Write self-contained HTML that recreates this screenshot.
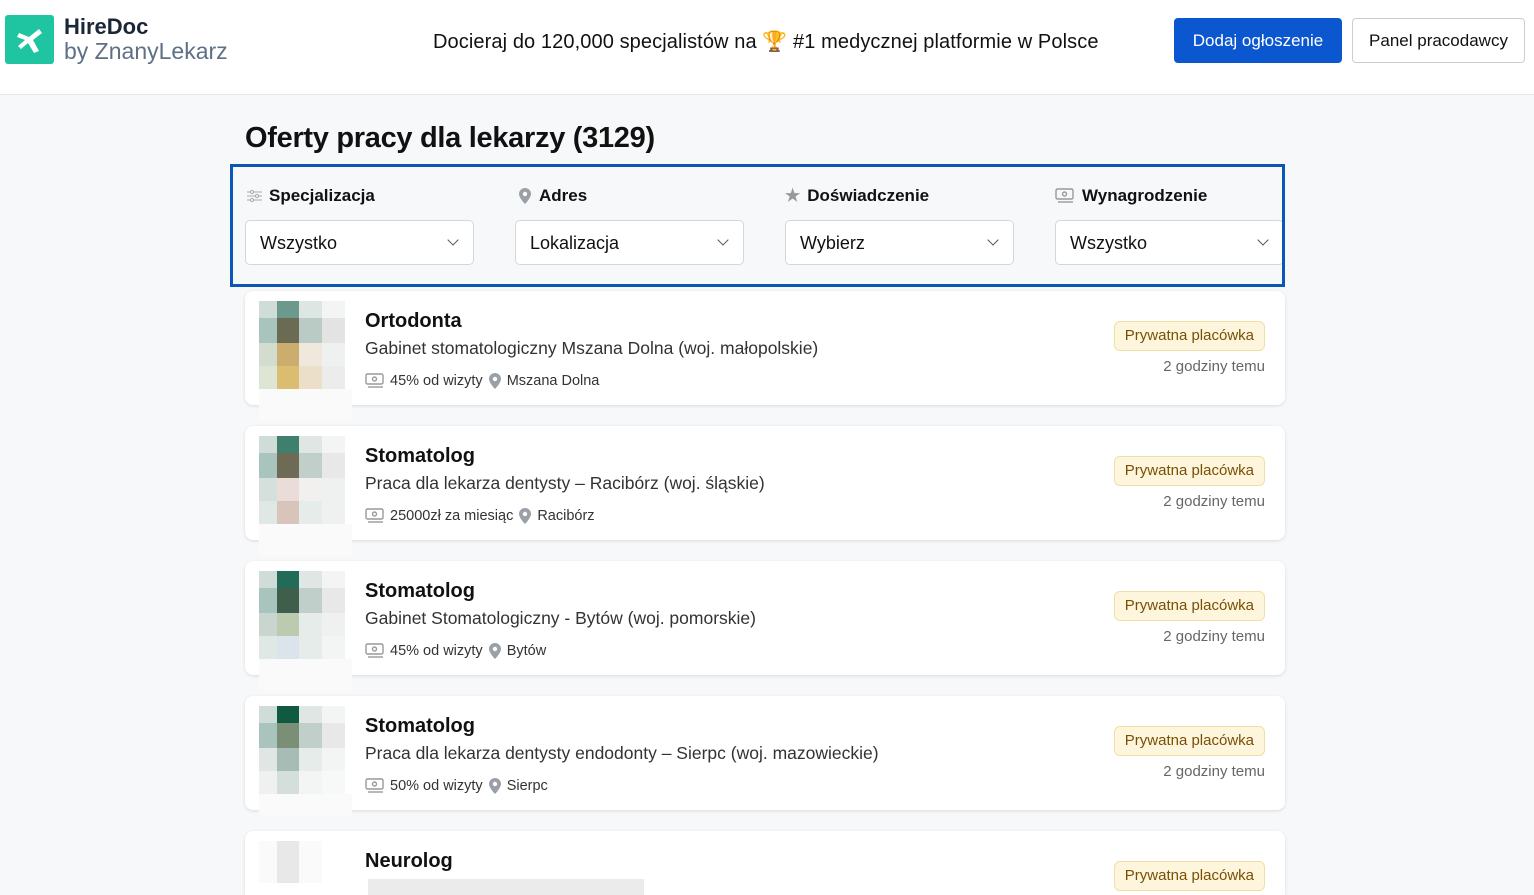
<!DOCTYPE html>
<html><head><meta charset="utf-8"><style>
*{box-sizing:border-box;margin:0;padding:0}
html,body{width:1534px;height:895px;overflow:hidden}
body{background:#f7f8fa;font-family:"Liberation Sans",sans-serif;color:#1a2330;position:relative}
.hdr{position:absolute;left:0;top:0;width:1534px;height:95px;background:#fff;border-bottom:1px solid #e3e6ea}
.logo{position:absolute;left:5px;top:15px;width:49px;height:49px;background:#1fc4a1;border-radius:3px}
.brand{position:absolute;left:64px;top:14px;font-size:22px;line-height:25px}
.brand b{color:#1b2636;font-weight:bold}
.brand span{color:#5f6f84;display:block;font-size:23px}
.tag{position:absolute;left:433px;top:29px;font-size:20px;color:#111;letter-spacing:0.1px}
.btn1{position:absolute;left:1174px;top:18px;width:168px;height:45px;background:#0b57d0;color:#fff;border-radius:4px;font-size:17px;text-align:center;line-height:45px}
.btn2{position:absolute;left:1352px;top:18px;width:173px;height:45px;background:#fff;border:1px solid #c9ced5;color:#111;border-radius:4px;font-size:17px;text-align:center;line-height:43px}
h1{position:absolute;left:245px;top:122px;font-size:29px;font-weight:bold;color:#111;letter-spacing:-0.3px}
.filt{position:absolute;left:230px;top:164px;width:1055px;height:123px;border:3px solid #0b57b7;background:#f7f8fa;overflow:hidden}
.f{position:absolute;top:0}
.f .l{position:absolute;top:19px;font-size:17px;font-weight:bold;color:#111;white-space:nowrap;display:flex;align-items:center;gap:7px}
.f .s{position:absolute;top:53px;width:229px;height:45px;background:#fff;border:1px solid #d3d7dc;border-radius:5px;font-size:18px;padding-left:14px;line-height:44px;color:#111}
.f .s i{position:absolute;right:16px;top:15px;width:8px;height:8px;border-right:1.5px solid #555;border-bottom:1.5px solid #555;transform:rotate(45deg)}
.card{position:absolute;left:245px;width:1040px;height:114px;background:#fff;border-radius:8px;box-shadow:0 1px 3px rgba(0,0,0,.12);overflow:visible}
.img{position:absolute;left:14px;top:10px;display:grid;grid-template-columns:18px 22px 23px 23px;grid-template-rows:17px 25px 23px 23px}
.under{position:absolute;left:14px;top:98px;width:93px;height:31px;background:#f9faf9}
.t{position:absolute;left:120px;top:19px;font-size:20px;font-weight:bold;color:#111}
.d{position:absolute;left:120px;top:47px;font-size:17.5px;color:#333}
.m{position:absolute;left:120px;top:81px;font-size:14.5px;color:#333;display:flex;align-items:center;gap:5px;white-space:nowrap}
.badge{position:absolute;right:20px;top:30px;height:30px;padding:0 10px;background:#fdf6dd;border:1px solid #f0dfa5;border-radius:6px;color:#7a4f05;font-size:15px;line-height:28px}
.time{position:absolute;right:20px;top:67px;font-size:15px;color:#666}
</style></head><body>
<svg width="0" height="0" style="position:absolute"><defs>
<symbol id="money" viewBox="0 0 20 16"><rect x="1" y="1" width="17" height="10" rx="1.5" fill="none" stroke="#999" stroke-width="1.4"/><circle cx="9.5" cy="6" r="2" fill="none" stroke="#999" stroke-width="1.4"/><path d="M3 14h15" stroke="#999" stroke-width="1.4"/></symbol>
<symbol id="pin" viewBox="0 0 14 18"><path d="M7 1C3.7 1 1 3.6 1 6.9 1 11 7 17 7 17s6-6 6-10.1C13 3.6 10.3 1 7 1z" fill="#9aa0a8"/><circle cx="7" cy="7" r="2.2" fill="#fff"/></symbol>
</defs></svg>
<div class="hdr">
<div class="logo"><svg width="49" height="49" viewBox="0 0 49 49"><path d="M14 18 L24 22 L34 14 L37 18 L28 25 L34 36 L29 38 L23 28 L16 34 L13 31 L20 25 L12 22Z" fill="#fff"/></svg></div>
<div class="brand"><b>HireDoc</b><span>by ZnanyLekarz</span></div>
<div class="tag">Docieraj do 120,000 specjalistów na 🏆 #1 medycznej platformie w Polsce</div>
<div class="btn1">Dodaj ogłoszenie</div>
<div class="btn2">Panel pracodawcy</div>
</div>
<h1>Oferty pracy dla lekarzy (3129)</h1>
<div class="filt">
<div class="f" style="left:12px"><div class="l" style="left:2px"><svg width="15" height="12" viewBox="0 0 15 12"><path d="M0 2h15M0 6h15M0 10h15" stroke="#aaa" stroke-width="1"/><circle cx="5" cy="2" r="1.5" fill="#fff" stroke="#aaa"/><circle cx="10" cy="6" r="1.5" fill="#fff" stroke="#aaa"/><circle cx="5" cy="10" r="1.5" fill="#fff" stroke="#aaa"/></svg>Specjalizacja</div><div class="s">Wszystko<i></i></div></div>
<div class="f" style="left:282px"><div class="l" style="left:3px"><svg width="14" height="18"><use href="#pin"/></svg>Adres</div><div class="s">Lokalizacja<i></i></div></div>
<div class="f" style="left:552px"><div class="l" style="left:0"><span style="color:#999">★</span>Doświadczenie</div><div class="s">Wybierz<i></i></div></div>
<div class="f" style="left:822px"><div class="l" style="left:0"><svg width="20" height="16"><use href="#money"/></svg>Wynagrodzenie</div><div class="s">Wszystko<i></i></div></div>
</div>

<div class="card" style="top:291px"><div class="img">
<div style="background:#cfdcd8"></div><div style="background:#6b9a8c"></div><div style="background:#dde6e2"></div><div style="background:#f3f5f4"></div>
<div style="background:#a8c4bc"></div><div style="background:#6b6a52"></div><div style="background:#b9cbc4"></div><div style="background:#e3e3e3"></div>
<div style="background:#d2ddd0"></div><div style="background:#cbad6e"></div><div style="background:#f0e8dc"></div><div style="background:#eef1f0"></div>
<div style="background:#dfe5d5"></div><div style="background:#dbbd72"></div><div style="background:#ebdfc9"></div><div style="background:#ebeceb"></div>
</div><div class="under"></div>
<div class="t">Ortodonta</div><div class="d">Gabinet stomatologiczny Mszana Dolna (woj. małopolskie)</div>
<div class="m"><svg width="20" height="16"><use href="#money"/></svg>45% od wizyty <svg width="14" height="18"><use href="#pin"/></svg>Mszana Dolna</div>
<div class="badge">Prywatna placówka</div><div class="time">2 godziny temu</div></div>

<div class="card" style="top:426px"><div class="img">
<div style="background:#cfdcd8"></div><div style="background:#3f7f6e"></div><div style="background:#dfe6e3"></div><div style="background:#f3f5f4"></div>
<div style="background:#a9c4bc"></div><div style="background:#6f6a55"></div><div style="background:#c0cfca"></div><div style="background:#e8e8e8"></div>
<div style="background:#d5e0dc"></div><div style="background:#eadcd8"></div><div style="background:#f2f0ef"></div><div style="background:#eef1f0"></div>
<div style="background:#e0e8e5"></div><div style="background:#d8c4ba"></div><div style="background:#e6ecea"></div><div style="background:#eef1f0"></div>
</div><div class="under"></div>
<div class="t">Stomatolog</div><div class="d">Praca dla lekarza dentysty – Racibórz (woj. śląskie)</div>
<div class="m"><svg width="20" height="16"><use href="#money"/></svg>25000zł za miesiąc <svg width="14" height="18"><use href="#pin"/></svg>Racibórz</div>
<div class="badge">Prywatna placówka</div><div class="time">2 godziny temu</div></div>

<div class="card" style="top:561px"><div class="img">
<div style="background:#cfdcd8"></div><div style="background:#226b58"></div><div style="background:#dfe6e3"></div><div style="background:#f3f5f4"></div>
<div style="background:#a9c4bc"></div><div style="background:#3f5e4c"></div><div style="background:#c0cfca"></div><div style="background:#e8e8e8"></div>
<div style="background:#c8d6cf"></div><div style="background:#bccbb0"></div><div style="background:#e6ecea"></div><div style="background:#eef1f0"></div>
<div style="background:#e0e8e5"></div><div style="background:#dbe4ea"></div><div style="background:#e6ecea"></div><div style="background:#f3f5f4"></div>
</div><div class="under"></div>
<div class="t">Stomatolog</div><div class="d">Gabinet Stomatologiczny - Bytów (woj. pomorskie)</div>
<div class="m"><svg width="20" height="16"><use href="#money"/></svg>45% od wizyty <svg width="14" height="18"><use href="#pin"/></svg>Bytów</div>
<div class="badge">Prywatna placówka</div><div class="time">2 godziny temu</div></div>

<div class="card" style="top:696px"><div class="img">
<div style="background:#cfdcd8"></div><div style="background:#0f5a40"></div><div style="background:#dfe6e3"></div><div style="background:#f3f5f4"></div>
<div style="background:#a9c4bc"></div><div style="background:#7b8f77"></div><div style="background:#c0cfca"></div><div style="background:#e8e8e8"></div>
<div style="background:#e0e6e4"></div><div style="background:#a8bcb6"></div><div style="background:#e6ecea"></div><div style="background:#f3f5f4"></div>
<div style="background:#eef1f0"></div><div style="background:#d4dfdc"></div><div style="background:#f3f5f4"></div><div style="background:#f7f8f8"></div>
</div><div class="under" style="height:21px"></div>
<div class="t">Stomatolog</div><div class="d">Praca dla lekarza dentysty endodonty – Sierpc (woj. mazowieckie)</div>
<div class="m"><svg width="20" height="16"><use href="#money"/></svg>50% od wizyty <svg width="14" height="18"><use href="#pin"/></svg>Sierpc</div>
<div class="badge">Prywatna placówka</div><div class="time">2 godziny temu</div></div>

<div class="card" style="top:831px;height:64px;border-radius:8px 8px 0 0;overflow:hidden"><div class="img" style="grid-template-rows:17px 25px 12px">
<div style="background:#fafafa"></div><div style="background:#e8e8e8"></div><div style="background:#fafafa"></div><div style="background:#fff"></div>
<div style="background:#fafafa"></div><div style="background:#e8e8e8"></div><div style="background:#fafafa"></div><div style="background:#fff"></div>
</div>
<div class="t">Neurolog</div>
<div style="position:absolute;left:123px;top:48px;width:276px;height:16px;background:#ebebeb"></div>
<div class="badge">Prywatna placówka</div></div>
</body></html>
